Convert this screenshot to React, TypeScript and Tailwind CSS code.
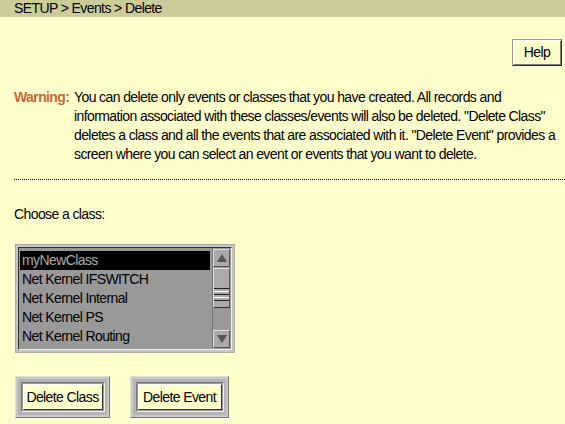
const classes = [
  "myNewClass",
  "Net Kernel IFSWITCH",
  "Net Kernel Internal",
  "Net Kernel PS",
  "Net Kernel Routing",
];

const font = "font-['Liberation_Sans',Arial,sans-serif] tracking-[-0.6px]";

function FramedButton({ label, outer, inner }: { label: string; outer: string; inner: string }) {
  return (
    <div
      className={`${outer} h-[42px] flex items-center justify-center bg-[#b4b4b4] border border-t-[#e0e0e0] border-l-[#e0e0e0] border-b-[#777] border-r-[#777] shadow-[inset_0_0_0_2px_#c8c8c8]`}
    >
      <div className="border border-t-[#777] border-l-[#777] border-b-[#eee] border-r-[#eee] p-px bg-[#9a9a9a]">
        <button
          className={`${inner} h-[26px] bg-[#ffffcc] text-black text-[14px] border border-t-[#fff] border-l-[#fff] border-b-[#333] border-r-[#333]`}
        >
          {label}
        </button>
      </div>
    </div>
  );
}

export default function App() {
  return (
    <div className={`w-[565px] h-[424px] bg-[#ffffcc] text-black overflow-hidden ${font}`}>
      {/* breadcrumb */}
      <div className="h-[17px] bg-[#cccc99] pl-[14px] text-[14px] leading-[17px]">
        SETUP &gt; Events &gt; Delete
      </div>

      <div className="flex justify-end pr-[3px] mt-[22px]">
        <button className="w-[50px] h-[27px] bg-[#ffffcc] text-[14px] border border-t-[#999] border-l-[#999] border-b-[#333] border-r-[#333] shadow-[inset_1px_1px_0_#fff,inset_-1px_-1px_0_#777]">
          Help
        </button>
      </div>

      <div className="flex mt-[22px] pl-[14px] text-[14px] leading-[19px]">
        <div className="w-[60px] shrink-0 font-bold text-[#cc6633]">Warning:</div>
        <div className="pr-[2px]">
          You can delete only events or classes that you have created. All records and information
          associated with these classes/events will also be deleted. "Delete Class" deletes a class
          and all the events that are associated with it. "Delete Event" provides a screen where you
          can select an event or events that you want to delete.
        </div>
      </div>

      <div className="ml-[14px] mt-[15px] border-t border-dotted border-black" />

      <div className="pl-[14px] mt-[25px] text-[14px] leading-[19px]">Choose a class:</div>

      <div className="ml-[15px] mt-[20px] w-[220px] h-[109px] bg-[#c4c4c4] border border-[#aaa] p-[2px]">
        <div className="h-full flex border border-t-[#333] border-l-[#333] border-b-[#eee] border-r-[#eee] bg-[#999999] p-px">
          <div className="flex-1 pt-[2px] text-[14px] leading-[19px]">
            {classes.map((c, i) => (
              <div
                key={c}
                className={i === 0 ? "bg-black text-[#aaaaaa] pl-[2px]" : "pl-[2px] text-black"}
              >
                {c}
              </div>
            ))}
          </div>
          <div className="w-[18px] ml-[2px] flex flex-col bg-[#999] border-l border-[#777]">
            <div className="h-[18px] flex items-center justify-center bg-[#aaa] border border-t-[#ddd] border-l-[#ddd] border-b-[#555] border-r-[#555]">
              <svg width="10" height="8" viewBox="0 0 10 8">
                <path d="M5 0 L10 8 L0 8 Z" fill="#555" />
              </svg>
            </div>
            <div className="h-[40px] mt-px flex flex-col justify-center bg-[#aaa] border border-t-[#ddd] border-l-[#ddd] border-b-[#333] border-r-[#555]">
              <div className="h-[22px] mt-[12px] flex flex-col justify-center gap-[2px]">
                <div className="h-px bg-[#222]" />
                <div className="h-px bg-[#fff]" />
                <div className="h-px bg-[#222]" />
                <div className="h-px bg-[#fff]" />
                <div className="h-px bg-[#222]" />
              </div>
            </div>
            <div className="flex-1" />
            <div className="h-[18px] flex items-center justify-center bg-[#aaa] border border-t-[#ddd] border-l-[#ddd] border-b-[#555] border-r-[#555]">
              <svg width="10" height="8" viewBox="0 0 10 8">
                <path d="M0 0 L10 0 L5 8 Z" fill="#555" />
              </svg>
            </div>
          </div>
        </div>
      </div>

      <div className="flex gap-[20px] ml-[15px] mt-[23px]">
        <FramedButton label="Delete Class" outer="w-[95px]" inner="w-[80px]" />
        <FramedButton label="Delete Event" outer="w-[99px]" inner="w-[84px]" />
      </div>
    </div>
  );
}
